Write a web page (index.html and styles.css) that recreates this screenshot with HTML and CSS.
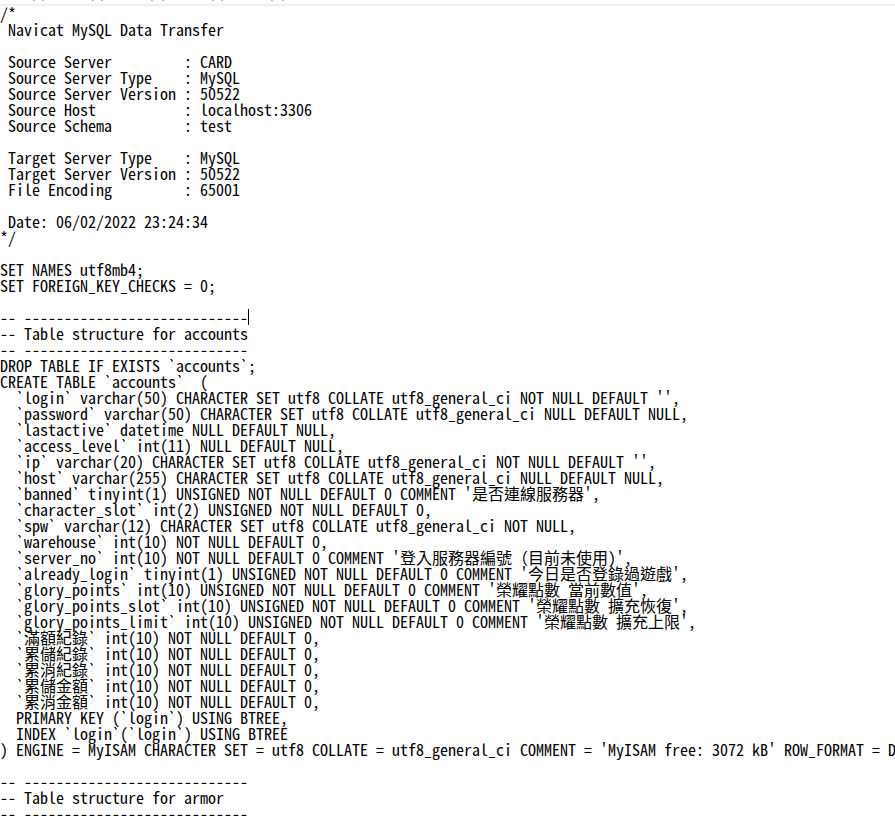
FILE: index.html
```html
<!DOCTYPE html>
<html lang="zh-Hant">
<head>
<meta charset="utf-8">
<title>accounts.sql - 記事本</title>
<link rel="stylesheet" href="styles.css">
</head>
<body>
<div class="menubar"><div class="menu-items"><span>檔案(F)</span><span>編輯(E)</span><span>格式(O)</span><span>檢視(V)</span><span>說明(H)</span></div></div>
<div class="divider"></div>
<pre class="editor">/*
 Navicat MySQL Data Transfer

 Source Server         : CARD
 Source Server Type    : MySQL
 Source Server Version : 50522
 Source Host           : localhost:3306
 Source Schema         : test

 Target Server Type    : MySQL
 Target Server Version : 50522
 File Encoding         : 65001

 Date: 06/02/2022 23:24:34
*/

SET NAMES utf8mb4;
SET FOREIGN_KEY_CHECKS = 0;

-- ----------------------------<span class="caret"></span>
-- Table structure for accounts
-- ----------------------------
DROP TABLE IF EXISTS `accounts`;
CREATE TABLE `accounts`  (
  `login` varchar(50) CHARACTER SET utf8 COLLATE utf8_general_ci NOT NULL DEFAULT '',
  `password` varchar(50) CHARACTER SET utf8 COLLATE utf8_general_ci NULL DEFAULT NULL,
  `lastactive` datetime NULL DEFAULT NULL,
  `access_level` int(11) NULL DEFAULT NULL,
  `ip` varchar(20) CHARACTER SET utf8 COLLATE utf8_general_ci NOT NULL DEFAULT '',
  `host` varchar(255) CHARACTER SET utf8 COLLATE utf8_general_ci NULL DEFAULT NULL,
  `banned` tinyint(1) UNSIGNED NOT NULL DEFAULT 0 COMMENT '是否連線服務器',
  `character_slot` int(2) UNSIGNED NOT NULL DEFAULT 0,
  `spw` varchar(12) CHARACTER SET utf8 COLLATE utf8_general_ci NOT NULL,
  `warehouse` int(10) NOT NULL DEFAULT 0,
  `server_no` int(10) NOT NULL DEFAULT 0 COMMENT '登入服務器編號（目前未使用)',
  `already_login` tinyint(1) UNSIGNED NOT NULL DEFAULT 0 COMMENT '今日是否登錄過遊戲',
  `glory_points` int(10) UNSIGNED NOT NULL DEFAULT 0 COMMENT '榮耀點數 當前數值',
  `glory_points_slot` int(10) UNSIGNED NOT NULL DEFAULT 0 COMMENT '榮耀點數 擴充恢復',
  `glory_points_limit` int(10) UNSIGNED NOT NULL DEFAULT 0 COMMENT '榮耀點數 擴充上限',
  `滿額紀錄` int(10) NOT NULL DEFAULT 0,
  `累儲紀錄` int(10) NOT NULL DEFAULT 0,
  `累消紀錄` int(10) NOT NULL DEFAULT 0,
  `累儲金額` int(10) NOT NULL DEFAULT 0,
  `累消金額` int(10) NOT NULL DEFAULT 0,
  PRIMARY KEY (`login`) USING BTREE,
  INDEX `login`(`login`) USING BTREE
) ENGINE = MyISAM CHARACTER SET = utf8 COLLATE = utf8_general_ci COMMENT = 'MyISAM free: 3072 kB' ROW_FORMAT = Dynamic;

-- ----------------------------
-- Table structure for armor
-- ----------------------------
DROP TABLE IF EXISTS `armor`;
</pre>
</body>
</html>
```
FILE: styles.css
```css
html {
  overflow: hidden;
  background: #ffffff;
}

body {
  margin: 0;
  background: #ffffff;
  color: #000000;
}

.menubar {
  height: 4px;
  overflow: hidden;
  background: #ffffff;
}

.menu-items {
  display: flex;
  gap: 20px;
  margin-top: -14px;
  padding-left: 7px;
  font-family: "Noto Sans CJK TC", sans-serif;
  font-size: 12px;
  line-height: 16px;
  color: #555555;
  white-space: nowrap;
}

.divider {
  height: 2px;
  background: #f0f0f0;
}

.editor {
  margin: -1px 0 0 0;
  padding: 0;
  font-family: "Noto Sans Mono CJK TC", "Noto Sans Mono CJK SC", "Liberation Mono", monospace;
  font-size: 16px;
  line-height: 16px;
  white-space: pre;
  color: #000000;
}

.caret {
  display: inline-block;
  width: 0;
  height: 16px;
  border-left: 1px solid #000000;
  vertical-align: top;
}
```
